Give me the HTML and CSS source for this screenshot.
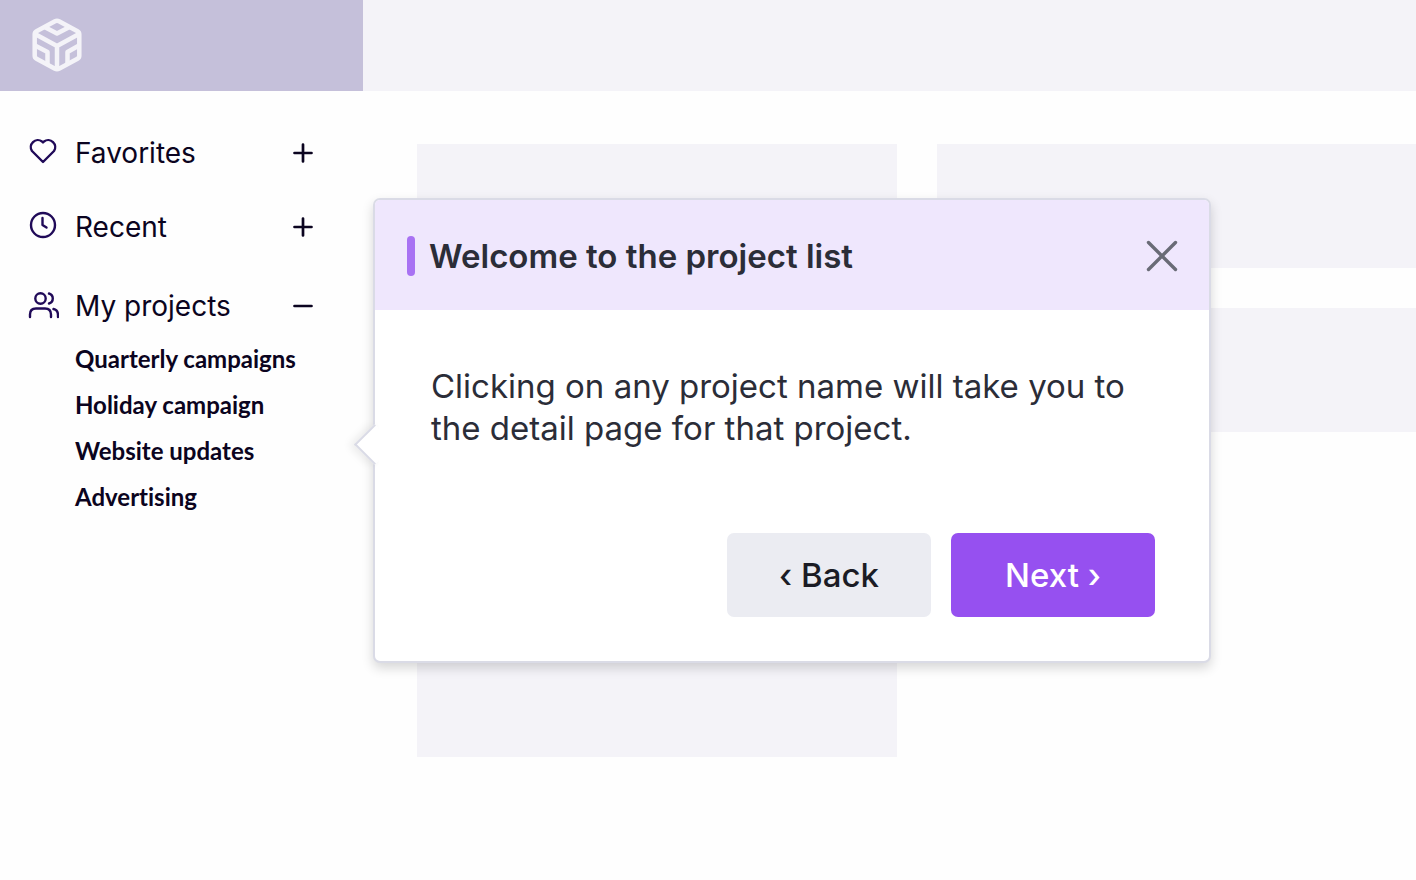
FILE: index.html
```html
<!DOCTYPE html>
<html lang="en">
<head>
    <meta charset="UTF-8">
    <meta name="viewport" content="width=device-width, initial-scale=1.0">
    <title>Projects</title>
    <link rel="stylesheet" href="styles.css">
</head>
<body>
    <header class="topbar">
        <a class="brand" href="#" aria-label="Home">
            <svg class="logo" viewBox="0 0 50 54" aria-hidden="true">
                <path d="M23 3.300Q25 2.200 27 3.300L45.500 13.200Q47.300 14.200 47.300 16.200V37.800Q47.300 39.800 45.500 40.800L27 50.800Q25 51.800 23 50.800L4.500 40.800Q2.700 39.800 2.700 37.800V16.200Q2.700 14.200 4.500 13.200Z"/>
                <path d="M3 16L25 28L47 16M25 28V51"/>
                <path d="M12.500 9L25 15.500L37.500 9"/>
                <path d="M3 27.500L15.500 34V46M47 27.500L35.500 34V46"/>
            </svg>
        </a>
    </header>

    <div class="layout">
        <nav class="sidebar">
            <div class="nav-row favorites">
                <svg class="icon" viewBox="0 0 32 32" aria-hidden="true">
                    <path d="M16 25L5 14A7 7 0 0 1 15 4.500L16 5.500L17 4.500A7 7 0 0 1 27 14Z"/>
                </svg>
                <a href="#">Favorites</a>
                <button class="toggle" aria-label="Add favorite">
                    <svg viewBox="0 0 20 20"><path d="M1.500 10H18.500M10 1.500V18.500"/></svg>
                </button>
            </div>
            <div class="nav-row recent">
                <svg class="icon" viewBox="0 0 32 32" aria-hidden="true">
                    <circle cx="16" cy="14" r="12"/>
                    <path d="M15.500 7V14L19.500 16.500"/>
                </svg>
                <a href="#">Recent</a>
                <button class="toggle" aria-label="Add recent">
                    <svg viewBox="0 0 20 20"><path d="M1.500 10H18.500M10 1.500V18.500"/></svg>
                </button>
            </div>
            <div class="nav-row projects">
                <svg class="icon" viewBox="0 0 32 32" aria-hidden="true">
                    <circle cx="13.500" cy="8.500" r="5.200"/>
                    <path d="M3 27V24.500Q3 18.500 9 18.500H18Q24 18.500 24 24.500V27"/>
                    <path d="M22 3.500A5.200 5.200 0 0 1 22 13.500M26.500 19Q31 20 31 25V27"/>
                </svg>
                <a href="#">My projects</a>
                <button class="toggle" aria-label="Collapse projects">
                    <svg viewBox="0 0 20 20"><path d="M1.500 10H18.500"/></svg>
                </button>
            </div>
            <ul class="project-list">
                <li><a href="#">Quarterly campaigns</a></li>
                <li><a href="#">Holiday campaign</a></li>
                <li><a href="#">Website updates</a></li>
                <li><a href="#">Advertising</a></li>
            </ul>
        </nav>

        <main class="content">
            <div class="card tall"></div>
            <div class="column">
                <div class="card"></div>
                <div class="card"></div>
            </div>

            <section class="tour" role="dialog" aria-labelledby="tour-title">
                <div class="tour-header">
                    <h1 id="tour-title">Welcome to the project list</h1>
                    <button class="close" aria-label="Close">
                        <svg viewBox="0 0 32 32"><path d="M2.500 2.500L29.500 29.500M29.500 2.500L2.500 29.500"/></svg>
                    </button>
                </div>
                <div class="tour-body">
                    <p>Clicking on any project name will take you to the detail page for that project.</p>
                    <div class="actions">
                        <button class="btn">‹ Back</button>
                        <button class="btn primary">Next ›</button>
                    </div>
                </div>
            </section>
        </main>
    </div>
</body>
</html>
```
FILE: styles.css
```css
* {
    margin: 0;
    padding: 0;
    box-sizing: border-box;
}

body {
    font-family: Inter, "Liberation Sans", sans-serif;
    background: #fefefe;
    color: #0b0420;
}

a {
    color: inherit;
    text-decoration: none;
}

button {
    font: inherit;
    border: none;
    background: none;
    cursor: pointer;
}

svg {
    display: block;
    fill: none;
    stroke: currentColor;
    stroke-linecap: round;
    stroke-linejoin: round;
}

.topbar {
    height: 91px;
    background: #f4f3f8;
}

.brand {
    display: flex;
    align-items: center;
    width: 363px;
    height: 91px;
    padding: 0 0 1px 32px;
    background: #c5c0da;
    color: #f4f3f8;
}

.logo {
    width: 50px;
    height: 54px;
    stroke-width: 4.5;
    stroke-linecap: butt;
}

.layout {
    display: flex;
    align-items: flex-start;
}

.sidebar {
    width: 363px;
    flex-shrink: 0;
    padding: 42px 50px 0 27px;
}

.nav-row {
    display: flex;
    align-items: center;
    gap: 16px;
    height: 40px;
    font-size: 28px;
}

.recent {
    margin-top: 34px;
}

.projects {
    margin-top: 39px;
}

.icon {
    width: 32px;
    height: 32px;
    stroke: #200a58;
    stroke-width: 2.4;
}

.toggle {
    width: 20px;
    margin-left: auto;
    color: inherit;
}

.toggle svg {
    stroke-width: 2.7;
}

.project-list {
    display: flex;
    flex-direction: column;
    gap: 16px;
    margin-top: 18px;
    padding-left: 48px;
    list-style: none;
    font-family: Lato, sans-serif;
    font-size: 24px;
    line-height: 30px;
    font-weight: 700;
    font-variant-ligatures: none;
}

.content {
    position: relative;
    flex: 1;
    display: grid;
    grid-template-columns: 1fr 1fr;
    align-items: start;
    gap: 40px;
    padding: 53px 0 53px 54px;
}

.column {
    display: grid;
    gap: 40px;
}

.card {
    height: 124px;
    background: #f4f3f8;
}

.card.tall {
    height: 613px;
}

/* Tour popover, points at the project list */
.tour {
    position: absolute;
    top: 107px;
    left: 10px;
    width: 838px;
    max-width: calc(100% - 20px);
    background: #fff;
    border: 2px solid #dadbe6;
    border-radius: 7px;
    box-shadow: 0 5px 12px rgba(0, 0, 0, 0.16);
    color: #2b2d38;
}

.tour::before {
    content: "";
    position: absolute;
    top: 230px;
    left: -15px;
    width: 27px;
    height: 27px;
    background: #fff;
    border: solid #dadbe6;
    border-width: 0 0 2px 2px;
    box-shadow: -3px 4px 8px rgba(0, 0, 0, 0.08);
    transform: rotate(45deg);
    clip-path: polygon(-60% -60%, -40% -60%, 110% 90%, 110% 150%, -60% 150%);
}

.tour-header {
    display: flex;
    align-items: center;
    gap: 14px;
    height: 110px;
    padding: 2px 31px 0 32px;
    background: #efe7fd;
    border-radius: 5px 5px 0 0;
}

.tour-header::before {
    content: "";
    width: 8px;
    height: 40px;
    border-radius: 4px;
    background: #a872f3;
}

.tour-header h1 {
    font-size: 33px;
    line-height: 40px;
    font-weight: 600;
}

.close {
    width: 32px;
    margin-left: auto;
    color: #696b76;
}

.close svg {
    stroke-width: 3.4;
}

.tour-body {
    padding: 55px 54px 44px 56px;
}

.tour-body p {
    font-size: 33px;
    line-height: 42px;
}

.actions {
    display: flex;
    justify-content: flex-end;
    gap: 20px;
    margin-top: 84px;
}

.btn {
    width: 204px;
    height: 84px;
    border-radius: 7px;
    background: #ebecf2;
    color: #1b1c25;
    font-size: 33px;
    font-weight: 500;
}

.btn.primary {
    background: #9650f0;
    color: #fff;
}
```
